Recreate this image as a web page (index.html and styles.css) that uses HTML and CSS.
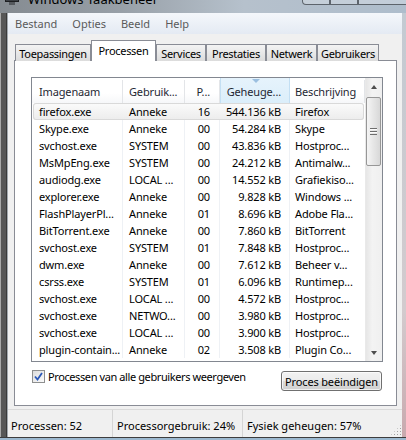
FILE: index.html
```html
<!DOCTYPE html>
<html lang="nl">

<head>
    <meta charset="UTF-8">
    <meta name="viewport" content="width=device-width, initial-scale=1.0">
    <title>Windows Taakbeheer</title>
    <link rel="stylesheet" href="styles.css">
</head>

<body>
    <div class="window">
        <div class="titlebar">
            <svg class="app-icon" width="16" height="16" viewBox="0 0 16 16">
                <rect x="1.5" y="1.5" width="13" height="10" fill="#3b3f44" stroke="#1d1f22" />
                <polyline points="3,9 5,6 7,8 9,4 13,6" stroke="#5fd35f" fill="none" />
                <rect x="5" y="12" width="6" height="3" fill="#55595e" />
            </svg>
            <span class="title">Windows Taakbeheer</span>
            <div class="caption">
                <span class="cap-btn"></span>
                <span class="cap-btn"></span>
                <span class="cap-btn close"></span>
            </div>
        </div>

        <div class="frame">
            <div class="frame-left"></div>

            <div class="client">
                <div class="menubar">
                    <span class="menu-item">Bestand</span>
                    <span class="menu-item">Opties</span>
                    <span class="menu-item">Beeld</span>
                    <span class="menu-item">Help</span>
                </div>

                <div class="tabs">
                    <div class="tab tab-apps">Toepassingen</div>
                    <div class="tab tab-proc active">Processen</div>
                    <div class="tab tab-serv">Services</div>
                    <div class="tab tab-perf">Prestaties</div>
                    <div class="tab tab-net">Netwerk</div>
                    <div class="tab tab-users">Gebruikers</div>
                </div>

                <div class="panel">
                    <div class="listview">
                        <div class="list">
                            <div class="row head">
                                <span class="cell c-name">Imagenaam</span>
                                <span class="cell c-user">Gebruik...</span>
                                <span class="cell c-cpu">P...</span>
                                <span class="cell c-mem sorted">Geheuge...</span>
                                <span class="cell c-desc">Beschrijving</span>
                            </div>
                            <div class="row sel">
                                <span class="cell c-name">firefox.exe</span>
                                <span class="cell c-user">Anneke</span>
                                <span class="cell c-cpu">16</span>
                                <span class="cell c-mem">544.136 kB</span>
                                <span class="cell c-desc">Firefox</span>
                            </div>
                            <div class="row">
                                <span class="cell c-name">Skype.exe</span>
                                <span class="cell c-user">Anneke</span>
                                <span class="cell c-cpu">00</span>
                                <span class="cell c-mem">54.284 kB</span>
                                <span class="cell c-desc">Skype</span>
                            </div>
                            <div class="row">
                                <span class="cell c-name">svchost.exe</span>
                                <span class="cell c-user">SYSTEM</span>
                                <span class="cell c-cpu">00</span>
                                <span class="cell c-mem">43.836 kB</span>
                                <span class="cell c-desc">Hostproc...</span>
                            </div>
                            <div class="row">
                                <span class="cell c-name">MsMpEng.exe</span>
                                <span class="cell c-user">SYSTEM</span>
                                <span class="cell c-cpu">00</span>
                                <span class="cell c-mem">24.212 kB</span>
                                <span class="cell c-desc">Antimalw...</span>
                            </div>
                            <div class="row">
                                <span class="cell c-name">audiodg.exe</span>
                                <span class="cell c-user">LOCAL ...</span>
                                <span class="cell c-cpu">00</span>
                                <span class="cell c-mem">14.552 kB</span>
                                <span class="cell c-desc">Grafiekiso...</span>
                            </div>
                            <div class="row">
                                <span class="cell c-name">explorer.exe</span>
                                <span class="cell c-user">Anneke</span>
                                <span class="cell c-cpu">00</span>
                                <span class="cell c-mem">9.828 kB</span>
                                <span class="cell c-desc">Windows ...</span>
                            </div>
                            <div class="row">
                                <span class="cell c-name">FlashPlayerPl...</span>
                                <span class="cell c-user">Anneke</span>
                                <span class="cell c-cpu">01</span>
                                <span class="cell c-mem">8.696 kB</span>
                                <span class="cell c-desc">Adobe Fla...</span>
                            </div>
                            <div class="row">
                                <span class="cell c-name">BitTorrent.exe</span>
                                <span class="cell c-user">Anneke</span>
                                <span class="cell c-cpu">00</span>
                                <span class="cell c-mem">7.860 kB</span>
                                <span class="cell c-desc">BitTorrent</span>
                            </div>
                            <div class="row">
                                <span class="cell c-name">svchost.exe</span>
                                <span class="cell c-user">SYSTEM</span>
                                <span class="cell c-cpu">01</span>
                                <span class="cell c-mem">7.848 kB</span>
                                <span class="cell c-desc">Hostproc...</span>
                            </div>
                            <div class="row">
                                <span class="cell c-name">dwm.exe</span>
                                <span class="cell c-user">Anneke</span>
                                <span class="cell c-cpu">00</span>
                                <span class="cell c-mem">7.612 kB</span>
                                <span class="cell c-desc">Beheer v...</span>
                            </div>
                            <div class="row">
                                <span class="cell c-name">csrss.exe</span>
                                <span class="cell c-user">SYSTEM</span>
                                <span class="cell c-cpu">01</span>
                                <span class="cell c-mem">6.096 kB</span>
                                <span class="cell c-desc">Runtimep...</span>
                            </div>
                            <div class="row">
                                <span class="cell c-name">svchost.exe</span>
                                <span class="cell c-user">LOCAL ...</span>
                                <span class="cell c-cpu">00</span>
                                <span class="cell c-mem">4.572 kB</span>
                                <span class="cell c-desc">Hostproc...</span>
                            </div>
                            <div class="row">
                                <span class="cell c-name">svchost.exe</span>
                                <span class="cell c-user">NETWO...</span>
                                <span class="cell c-cpu">00</span>
                                <span class="cell c-mem">3.980 kB</span>
                                <span class="cell c-desc">Hostproc...</span>
                            </div>
                            <div class="row">
                                <span class="cell c-name">svchost.exe</span>
                                <span class="cell c-user">LOCAL ...</span>
                                <span class="cell c-cpu">00</span>
                                <span class="cell c-mem">3.900 kB</span>
                                <span class="cell c-desc">Hostproc...</span>
                            </div>
                            <div class="row">
                                <span class="cell c-name">plugin-contain...</span>
                                <span class="cell c-user">Anneke</span>
                                <span class="cell c-cpu">02</span>
                                <span class="cell c-mem">3.508 kB</span>
                                <span class="cell c-desc">Plugin Co...</span>
                            </div>
                        </div>

                        <!-- verticale scrollbalk -->
                        <div class="scrollbar">
                            <div class="sb-arrow up"></div>
                            <div class="sb-thumb">
                                <span class="grip"></span>
                            </div>
                            <div class="sb-track"></div>
                            <div class="sb-arrow down"></div>
                        </div>
                    </div>

                    <div class="panel-footer">
                        <label class="check">
                            <span class="box">
                                <svg width="9" height="9" viewBox="0 0 9 9">
                                    <path d="M1 4.5 L3.5 7.5 L8 1" stroke="#2b58b8" stroke-width="1.8" fill="none" />
                                </svg>
                            </span>
                            Processen van alle gebruikers weergeven
                        </label>
                        <button class="btn">Proces beëindigen</button>
                    </div>
                </div>

                <div class="statusbar">
                    <span class="status s-count">Processen: 52</span>
                    <span class="status s-cpu">Processorgebruik: 24%</span>
                    <span class="status s-mem">Fysiek geheugen: 57%</span>
                    <span class="size-grip"></span>
                </div>
            </div>

            <div class="frame-right"></div>
        </div>
        <div class="frame-bottom"></div>
    </div>
</body>

</html>
```

FILE: styles.css
```css
* {
    box-sizing: border-box;
}

body {
    margin: 0;
    width: 406px;
    height: 440px;
    overflow: hidden;
    font-family: "Noto Sans", "Open Sans", sans-serif;
    font-size: 11px;
    letter-spacing: -0.15px;
    color: #000;
}

.window {
    display: flex;
    flex-direction: column;
    width: 406px;
    height: 440px;
    overflow: hidden;
    background: linear-gradient(90deg, #858b91 0, #98a0a8 30%, #b6c1cc 60%, #aebdcc 100%);
}

/* titelbalk (alleen de onderkant is zichtbaar) */
.titlebar {
    display: flex;
    align-items: flex-start;
    height: 13px;
    overflow: hidden;
    flex-shrink: 0;
}

.app-icon {
    margin: -10px 0 0 4px;
    flex-shrink: 0;
}

.title {
    margin: -7px 0 0 8px;
    font-size: 13px;
    letter-spacing: 0;
    line-height: 13px;
    white-space: nowrap;
}

.caption {
    display: flex;
    margin-left: auto;
    margin-right: -8px;
}

.cap-btn {
    width: 28px;
    height: 5px;
    border: 1px solid #5d646c;
    border-top: none;
    background: rgba(255, 255, 255, 0.25);
}

.cap-btn:first-child {
    border-radius: 0 0 0 4px;
}

.cap-btn.close {
    width: 56px;
    border-radius: 0 0 4px 0;
}

.frame {
    display: flex;
    flex: 1;
    min-height: 0;
}

.frame-left {
    width: 8px;
    flex-shrink: 0;
    background: linear-gradient(90deg, #a9a9a9 0 1px, #575757 1px 6px, #3a3a3a 6px 7px, #a2a8ae 7px 8px);
}

.frame-right {
    width: 4px;
    flex-shrink: 0;
    background: linear-gradient(#c3cad2, #d3cbce 70%, #c9a9ae);
}

.frame-bottom {
    height: 3px;
    flex-shrink: 0;
    background: linear-gradient(#3d3d3d 0 1px, #9cb8cf 1px);
}

.client {
    flex: 1;
    display: flex;
    flex-direction: column;
    background: #f0f0f0;
}

/* menu */
.menubar {
    display: flex;
    height: 21px;
    padding-left: 1px;
    background: linear-gradient(#f4f7fb, #e4eaf3);
}

.menu-item {
    padding: 0 6px;
    margin-right: 3px;
    line-height: 21px;
    letter-spacing: 0;
    color: #5a5a5a;
}

/* tabbladen */
.tabs {
    display: flex;
    align-items: flex-end;
    height: 21px;
    margin: 6px 0 -1px 7px;
    position: relative;
    z-index: 1;
}

.tab {
    display: flex;
    justify-content: center;
    align-items: center;
    height: 17px;
    border: 1px solid #898c95;
    border-bottom: none;
    background: linear-gradient(#f3f3f3, #e8e8e8 50%, #dcdcdc);
    white-space: nowrap;
    letter-spacing: -0.3px;
    padding-top: 1px;
}

.tab.active {
    height: 21px;
    background: #fff;
    padding-bottom: 2px;
}

.tab-apps { width: 76px; }
.tab-proc { width: 65px; }
.tab-serv { width: 50px; }
.tab-perf { width: 60px; }
.tab-net { width: 51px; }
.tab-users { width: 62px; }

/* paneel */
.panel {
    height: 346px;
    margin: 0 5px 0 6px;
    padding: 16px 13px 0 16px;
    border: 1px solid #898c95;
    background: #fff;
}

.listview {
    display: flex;
    height: 285px;
    border: 1px solid #828790;
    background: #fff;
}

.list {
    flex: 1;
}

.row {
    display: grid;
    grid-template-columns: 91px 62px 35px 70px 75px;
    height: 17px;
    line-height: 17px;
}

.cell {
    overflow: hidden;
    white-space: nowrap;
    border-right: 1px solid #eef1f5;
}

.c-name { padding-left: 7px; }
.c-user { padding-left: 6px; }
.c-cpu { text-align: right; padding-right: 9px; }
.c-mem { text-align: right; padding-right: 8px; }
.c-desc { padding-left: 5px; border-right: none; }

.row.head {
    height: 25px;
    line-height: 23px;
    padding-top: 2px;
    background: linear-gradient(#fff, #fff 60%, #f6f7f9);
}

.row.head .cell {
    border-right: 1px solid #e3e5e8;
    color: #1e2733;
}

.row.head .sorted {
    position: relative;
    margin-top: -2px;
    padding-top: 2px;
    background: linear-gradient(#e6f3fc, #dbeefa);
    border-left: 1px solid #c3dff3;
    border-right: 1px solid #c3dff3;
}

.row.head .sorted::before {
    content: '';
    position: absolute;
    top: 1px;
    left: 31px;
    border-left: 4px solid transparent;
    border-right: 4px solid transparent;
    border-top: 4px solid #9bbfe0;
}

.row.sel {
    grid-template-columns: 90px 62px 35px 70px 74px;
    margin: 0 1px;
    border-radius: 3px;
    box-shadow: inset 0 0 0 1px #d9d9d9;
    background: linear-gradient(#fbfbfb, #ececec);
}

.row.sel .cell {
    border-right-color: transparent;
}

.row.sel .c-name {
    padding-left: 6px;
}

/* scrollbalk */
.scrollbar {
    display: flex;
    flex-direction: column;
    width: 17px;
    background: linear-gradient(90deg, #e6e6e6, #f3f3f3 40%, #efefef);
    border-left: 1px solid #e9e9e9;
}

.sb-arrow {
    height: 17px;
    display: flex;
    justify-content: center;
    align-items: center;
}

.sb-arrow::after {
    content: '';
    border-left: 3px solid transparent;
    border-right: 3px solid transparent;
}

.sb-arrow.up::after {
    border-bottom: 4px solid #4d4d4d;
}

.sb-arrow.down::after {
    border-top: 4px solid #4d4d4d;
}

.sb-thumb {
    display: flex;
    justify-content: center;
    align-items: center;
    height: 69px;
    margin: 2px 1px 0 0;
    border: 1px solid #979797;
    border-radius: 2px;
    background: linear-gradient(90deg, #f5f5f5, #e6e6e6 50%, #d8d8d8);
}

.grip {
    width: 7px;
    height: 7px;
    background: repeating-linear-gradient(#6e6e6e 0 1px, #fcfcfc 1px 2px, transparent 2px 3px);
}

.sb-track {
    flex: 1;
}

/* onderkant paneel */
.panel-footer {
    display: flex;
    justify-content: space-between;
    align-items: flex-start;
    margin-top: 8px;
}

.check {
    display: flex;
    align-items: center;
    height: 13px;
    margin-left: 1px;
    white-space: nowrap;
    letter-spacing: -0.4px;
}

.box {
    display: flex;
    justify-content: center;
    align-items: center;
    width: 13px;
    height: 13px;
    margin-right: 3px;
    border: 1px solid #8e8f8f;
    background: linear-gradient(135deg, #dcdcdc, #fbfbfb);
}

.btn {
    width: 101px;
    height: 20px;
    margin: 1px 1px 0 0;
    padding: 0;
    border: 1px solid #707070;
    border-radius: 3px;
    background: linear-gradient(#f2f2f2, #ebebeb 50%, #dddddd 50%, #cfcfcf);
    font-family: inherit;
    font-size: 11px;
    letter-spacing: inherit;
    white-space: nowrap;
    color: #000;
    box-shadow: inset 0 0 0 1px rgba(255, 255, 255, 0.7);
}

/* statusbalk */
.statusbar {
    display: flex;
    height: 28px;
    margin-top: 3px;
    border-top: 1px solid #dadada;
    background: #f0f0f0;
}

.status {
    padding: 7px 0 0 3px;
    line-height: 17px;
    letter-spacing: 0;
    border-right: 1px solid #d5d5d5;
    white-space: nowrap;
}

.s-count { width: 105px; }
.s-cpu { width: 130px; padding-left: 4px; }
.s-mem { flex: 1; border-right: none; padding-left: 4px; }

.size-grip {
    width: 12px;
    align-self: flex-end;
    height: 12px;
    margin-bottom: 1px;
    background: radial-gradient(circle, #a0a0a0 0.8px, transparent 1px) 0 0 / 3px 3px;
    clip-path: polygon(100% 0, 100% 100%, 0 100%);
}
```
